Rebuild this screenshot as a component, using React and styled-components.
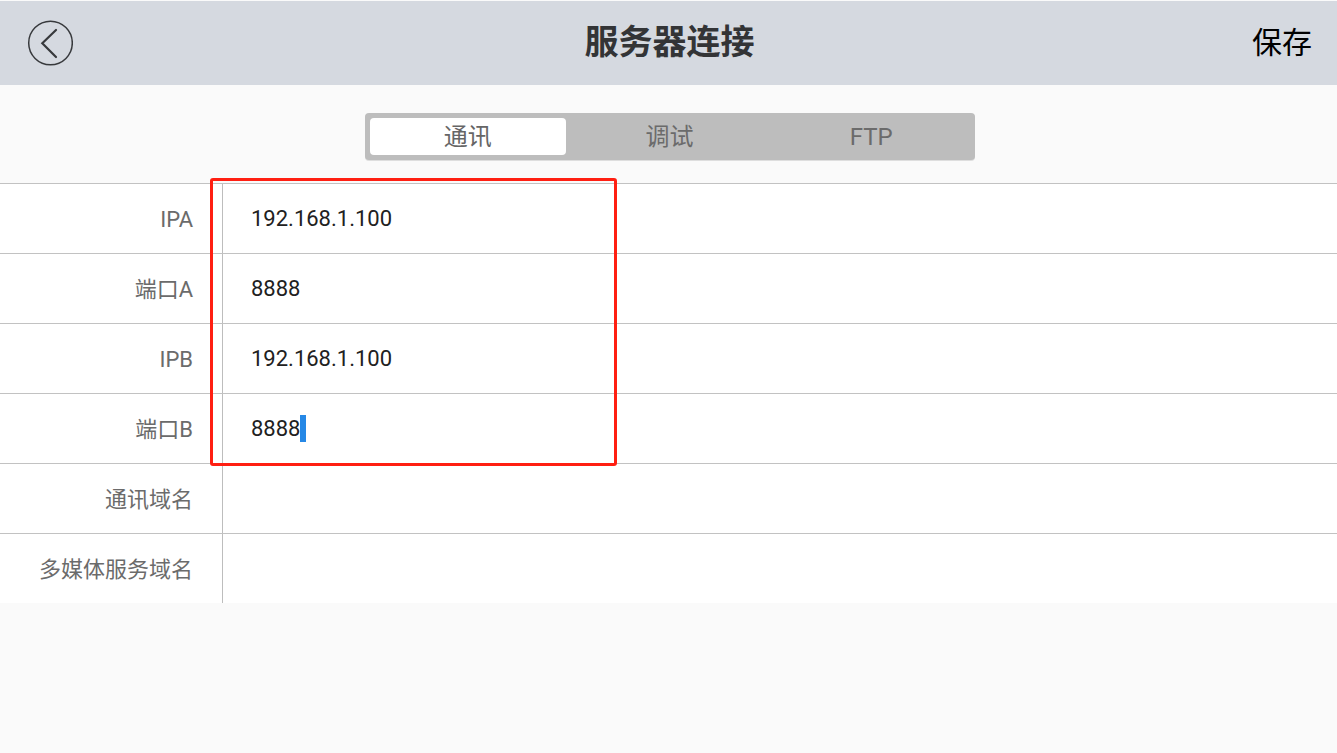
import React, { useState } from "react";
import styled, { createGlobalStyle } from "styled-components";

const GlobalStyle = createGlobalStyle`
  * { box-sizing: border-box; }
  body {
    margin: 0;
    background: #fafafa;
    font-family: Roboto, "Noto Sans CJK SC", sans-serif;
  }
  button, input { font-family: inherit; }
`;

const Header = styled.header`
  display: grid;
  grid-template-columns: 1fr auto 1fr;
  align-items: center;
  height: 85px;
  padding: 0 25px 0 27px;
  border-top: 1px solid #fafafa;
  background: #d5d9e0;
`;

const BackButton = styled.button`
  display: flex;
  justify-self: start;
  padding: 0;
  border: 0;
  background: none;
  color: #37393c;
`;

const Title = styled.h1`
  margin: 0;
  padding-bottom: 2px;
  font-size: 34px;
  font-weight: 700;
  line-height: 48px;
  color: #333436;
`;

const SaveButton = styled.button`
  justify-self: end;
  padding: 0;
  border: 0;
  background: none;
  font-size: 30px;
  line-height: 44px;
  color: #000;
`;

const TabArea = styled.div`
  display: flex;
  justify-content: center;
  padding: 28px 16px 23px 18px;
`;

const Tabs = styled.div`
  display: flex;
  gap: 5px;
  width: 610px;
  max-width: 100%;
  padding: 5px;
  border-radius: 4px;
  background: #bdbdbd;
  box-shadow: 0 1px 0 #dedede;
`;

const Tab = styled.button`
  flex: 1;
  height: 37px;
  padding: 2px 0 0;
  border: 0;
  border-radius: 4px;
  background: ${(p) => (p.$active ? "#fff" : "transparent")};
  font-size: 24px;
  line-height: 35px;
  color: ${(p) => (p.$active ? "#666" : "#6b6b6b")};
`;

const Form = styled.form`
  position: relative;
  background: #fff;
`;

const Row = styled.div`
  display: flex;
  height: 70px;
  border-top: 1px solid #c2c2c2;
`;

const Label = styled.label`
  flex: none;
  width: 223px;
  padding: 21px 29px 0 0;
  border-right: 1px solid #bdbdbd;
  font-size: 22px;
  line-height: 30px;
  text-align: right;
  color: #6b6b6b;
`;

const Field = styled.div`
  display: flex;
  align-items: center;
  flex: 1;
  padding-left: 28px;
`;

const Input = styled.input`
  flex: ${(p) => (p.$fit ? "none" : "1")};
  field-sizing: ${(p) => (p.$fit ? "content" : "fixed")};
  min-width: 0;
  height: 40px;
  padding: 0;
  border: 0;
  outline: 0;
  background: none;
  font-size: 22px;
  color: #212121;
`;

const Caret = styled.span`
  width: 6px;
  height: 27px;
  background: #2688e6;
`;

const Highlight = styled.div`
  position: absolute;
  top: -5px;
  left: 210px;
  width: 407px;
  height: 288px;
  border: 3px solid #ff1f12;
  border-radius: 3px;
  pointer-events: none;
`;

const TABS = ["通讯", "调试", "FTP"];

const FIELDS = [
  { id: "ipa", label: "IPA", value: "192.168.1.100" },
  { id: "port-a", label: "端口A", value: "8888" },
  { id: "ipb", label: "IPB", value: "192.168.1.100" },
  { id: "port-b", label: "端口B", value: "8888", caret: true },
  { id: "domain", label: "通讯域名", value: "" },
  { id: "media-domain", label: "多媒体服务域名", value: "" },
];

export default function App() {
  const [active, setActive] = useState(0);

  return (
    <>
      <GlobalStyle />
      <Header>
        <BackButton type="button" aria-label="返回">
          <svg width="46" height="46" viewBox="0 0 46 46" fill="none" stroke="currentColor">
            <circle cx="23.5" cy="23" r="21.8" strokeWidth="1.5" />
            <path d="M29 10 15.3 23.3 29 37" strokeWidth="2.2" strokeLinecap="round" />
          </svg>
        </BackButton>
        <Title>服务器连接</Title>
        <SaveButton type="submit" form="server-form">保存</SaveButton>
      </Header>
      <main>
        <TabArea>
          <Tabs role="tablist">
            {TABS.map((name, i) => (
              <Tab
                key={name}
                type="button"
                role="tab"
                aria-selected={i === active}
                $active={i === active}
                onClick={() => setActive(i)}
              >
                {name}
              </Tab>
            ))}
          </Tabs>
        </TabArea>
        <Form id="server-form" onSubmit={(e) => e.preventDefault()}>
          {FIELDS.map((f) => (
            <Row key={f.id}>
              <Label htmlFor={f.id}>{f.label}</Label>
              <Field>
                <Input id={f.id} type="text" defaultValue={f.value} $fit={f.caret} />
                {f.caret && <Caret />}
              </Field>
            </Row>
          ))}
          <Highlight />
        </Form>
      </main>
    </>
  );
}
